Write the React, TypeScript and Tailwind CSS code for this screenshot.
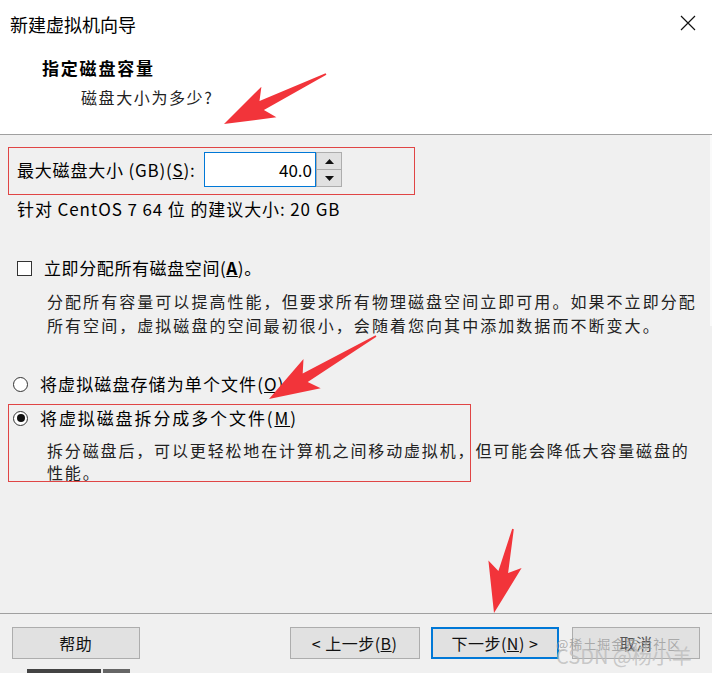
import React from 'react';

const font = { fontFamily: '"Noto Sans CJK SC", "Noto Sans", sans-serif' };

type Pt = [number, number];

// tapered annotation arrow: thin tail, wide head
function arrowPoints(tail: Pt, tip: Pt, headLen = 42, headHalf = 17, neckHalf = 5) {
  const dx = tip[0] - tail[0];
  const dy = tip[1] - tail[1];
  const len = Math.hypot(dx, dy);
  const ux = dx / len;
  const uy = dy / len;
  const nx = -uy;
  const ny = ux;
  const neck: Pt = [tip[0] - ux * headLen, tip[1] - uy * headLen];
  const barb: Pt = [tip[0] - ux * (headLen + 8), tip[1] - uy * (headLen + 8)];
  const p = (x: number, y: number) => `${x.toFixed(1)},${y.toFixed(1)}`;
  return [
    p(tail[0] + nx * 0.8, tail[1] + ny * 0.8),
    p(neck[0] + nx * neckHalf, neck[1] + ny * neckHalf),
    p(barb[0] + nx * headHalf, barb[1] + ny * headHalf),
    p(tip[0], tip[1]),
    p(barb[0] - nx * headHalf, barb[1] - ny * headHalf),
    p(neck[0] - nx * neckHalf, neck[1] - ny * neckHalf),
    p(tail[0] - nx * 0.8, tail[1] - ny * 0.8),
  ].join(' ');
}

const arrows: { tail: Pt; tip: Pt }[] = [
  { tail: [326, 74], tip: [224, 124] },
  { tail: [376, 336], tip: [269, 399] },
  { tail: [513, 529], tip: [494, 613] },
];

function Btn({ children, primary }: { children: React.ReactNode; primary?: boolean }) {
  return (
    <div
      className={`h-[32px] flex items-center justify-center bg-[#e1e1e1] text-[16px] tracking-[0.5px] text-[#111] ${
        primary ? 'border-2 border-[#0078d7]' : 'border border-[#adadad]'
      }`}
    >
      {children}
    </div>
  );
}

export default function App() {
  return (
    <div className="relative w-[712px] h-[673px] overflow-hidden bg-[#f0f0f0] flex flex-col" style={font}>
      {/* header */}
      <div className="h-[135px] bg-white border-b border-[#a0a0a0] shrink-0">
        <div className="flex items-center justify-between pl-[10px] pr-[16px] pt-[11px] h-[36px]">
          <span className="text-[18px] leading-[24px] text-black">新建虚拟机向导</span>
          <svg width="16" height="16" viewBox="0 0 16 16" className="mt-[-2px]">
            <path d="M1 1 L15 15 M15 1 L1 15" stroke="#111" strokeWidth="1.2" fill="none" />
          </svg>
        </div>
        <div className="ml-[42px] mt-[20px] text-[17px] leading-[24px] font-bold tracking-[1.8px] text-black">
          指定磁盘容量
        </div>
        <div className="ml-[81px] mt-[5px] text-[16px] leading-[24px] tracking-[1.6px] text-[#222]">
          磁盘大小为多少?
        </div>
      </div>

      {/* body */}
      <div className="h-[478px] shrink-0 text-black">
        <div className="flex items-center mt-[17px] ml-[17px] h-[35px]">
          <span className="text-[17px] tracking-[0.8px] w-[187px] whitespace-nowrap">
            最大磁盘大小 (GB)(<span className="underline">S</span>):
          </span>
          <div className="w-[112px] h-[35px] bg-white border border-[#0078d7] flex items-center justify-end pr-[3px] text-[17px]">
            40.0
          </div>
          <div className="w-[26px] h-[35px] flex flex-col border border-[#adadad] bg-[#e1e1e1]">
            <div className="flex-1 flex items-center justify-center border-b border-[#adadad]">
              <svg width="9" height="5" viewBox="0 0 9 5"><path d="M0 5 L4.5 0 L9 5 Z" fill="#111" /></svg>
            </div>
            <div className="flex-1 flex items-center justify-center">
              <svg width="9" height="5" viewBox="0 0 9 5"><path d="M0 0 L4.5 5 L9 0 Z" fill="#111" /></svg>
            </div>
          </div>
        </div>

        <div className="ml-[17px] mt-[11px] text-[17px] tracking-[0.9px] leading-[22px] whitespace-nowrap">
          针对 CentOS 7 64 位 的建议大小: 20 GB
        </div>

        <div className="flex items-center ml-[17px] mt-[36px] h-[24px]">
          <div className="w-[15px] h-[15px] border border-[#333] bg-white" />
          <span className="ml-[12px] text-[17px] tracking-[0.6px] whitespace-nowrap">
            立即分配所有磁盘空间(<span className="underline font-semibold">A</span>)。
          </span>
        </div>
        <div className="ml-[47px] mt-[9px] text-[16px] leading-[24px] tracking-[2.05px] text-[#222] whitespace-nowrap">
          分配所有容量可以提高性能，但要求所有物理磁盘空间立即可用。如果不立即分配
          <br />
          所有空间，虚拟磁盘的空间最初很小，会随着您向其中添加数据而不断变大。
        </div>

        <div className="flex items-center ml-[13px] mt-[35px] h-[24px]">
          <div className="w-[15px] h-[15px] rounded-full border border-[#333] bg-white" />
          <span className="ml-[12px] text-[17px] tracking-[1.1px] whitespace-nowrap">
            将虚拟磁盘存储为单个文件(<span className="underline">O</span>)
          </span>
        </div>

        <div className="flex items-center ml-[13px] mt-[10px] h-[24px]">
          <div className="w-[15px] h-[15px] rounded-full border border-[#333] bg-white flex items-center justify-center">
            <div className="w-[8px] h-[8px] rounded-full bg-[#111]" />
          </div>
          <span className="ml-[12px] text-[17px] tracking-[1.9px] whitespace-nowrap">
            将虚拟磁盘拆分成多个文件(<span className="underline">M</span>)
          </span>
        </div>
        <div className="ml-[47px] mt-[9px] text-[16px] leading-[22px] tracking-[1.85px] text-[#222] whitespace-nowrap">
          拆分磁盘后，可以更轻松地在计算机之间移动虚拟机，但可能会降低大容量磁盘的
          <br />
          性能。
        </div>
      </div>

      {/* footer */}
      <div className="border-t border-[#a0a0a0] flex-1 pt-[13px] px-[12px]">
        <div className="flex items-start">
          <div className="w-[128px]">
            <Btn>帮助</Btn>
          </div>
          <div className="w-[130px] ml-[150px]">
            <Btn>
              &lt; 上一步(<span className="underline">B</span>)
            </Btn>
          </div>
          <div className="w-[129px] ml-[11px]">
            <Btn primary>
              下一步(<span className="underline">N</span>) &gt;
            </Btn>
          </div>
          <div className="w-[128px] ml-[13px]">
            <Btn>
              <span className="text-[#555]">取消</span>
            </Btn>
          </div>
        </div>
        <div className="ml-[15px] mt-[10px] flex gap-[2px]">
          <div className="w-[74px] h-[6px] bg-[#444]" />
          <div className="w-[27px] h-[6px] bg-[#666]" />
        </div>
      </div>

      {/* right edge strip */}
      <div className="absolute right-0 top-[135px] w-[2px] h-[191px] bg-[#fafafa]" />

      {/* annotation boxes */}
      <div className="absolute left-[8px] top-[147px] w-[407px] h-[48px] border border-[#e04545] pointer-events-none" />
      <div className="absolute left-[8px] top-[404px] w-[463px] h-[78px] border border-[#e04545] pointer-events-none" />

      {/* watermark */}
      <div className="absolute left-[556px] top-[634px] text-[13px] text-[#9a9a9a]/80 whitespace-nowrap tracking-[1px]">
        @稀土掘金技术社区
      </div>
      <div className="absolute left-[556px] top-[643px] text-[20px] leading-[26px] text-[#bdbdbd]/80 whitespace-nowrap">
        CSDN @杨小羊
      </div>

      {/* annotation arrows */}
      <svg className="absolute inset-0 pointer-events-none" width="712" height="673">
        {arrows.map((a, i) => (
          <polygon key={i} points={arrowPoints(a.tail, a.tip)} fill="#f2343a" />
        ))}
      </svg>
    </div>
  );
}
